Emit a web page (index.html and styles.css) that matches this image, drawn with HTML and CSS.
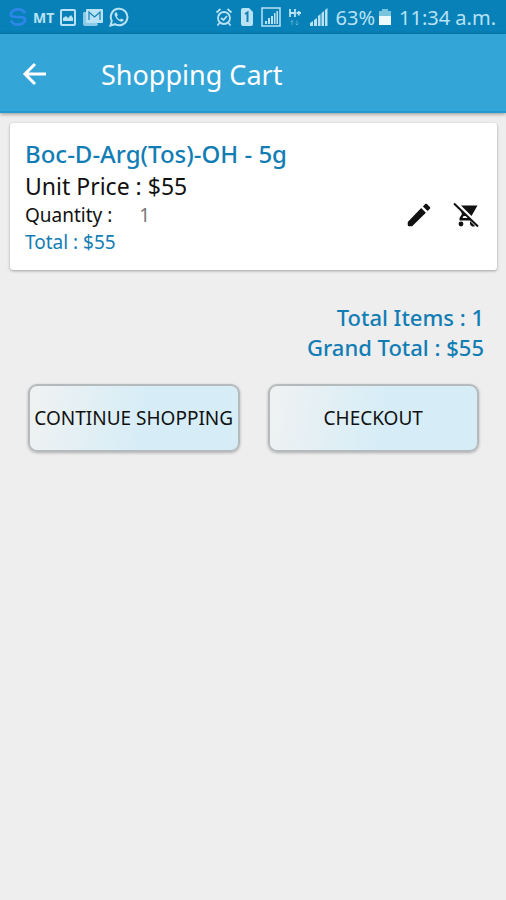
FILE: index.html
```html
<!DOCTYPE html>
<html lang="en">
<head>
<meta charset="utf-8">
<meta name="viewport" content="width=device-width, initial-scale=1">
<title>Shopping Cart</title>
<link rel="stylesheet" href="styles.css">
</head>
<body>
<div class="status">
  <div class="status-group notices">
    <svg width="20" height="20" viewBox="0 0 20 20" fill="none" stroke="#2f86ea" stroke-width="2.600"><path d="M17 6.500C15 1 5 1 3 6.500C2 10 6 10 10 10S18 10 17 13.500C15 19 5 19 3 13.500"/></svg>
    <span class="carrier">MT</span>
    <svg width="18" height="18" viewBox="0 0 18 18"><rect x="2" y="2" width="14" height="15" rx="1" fill="none" stroke="currentColor" stroke-width="2"/><path d="M4 13V10l3-2 2 2 3-3 2 3v3z" fill="currentColor"/></svg>
    <svg width="22" height="20" viewBox="0 0 22 20"><path d="M4 5H2Q1 5 1 6V17Q1 19 3 19H14Q16 19 16 17z" fill="currentColor" opacity=".75"/><rect x="4" y="2" width="17" height="14" rx="1" fill="currentColor"/><path d="M7 13V5l5.500 5L18 5v8" fill="none" stroke="#1580b5" stroke-width="1.200"/></svg>
    <svg width="20" height="20" viewBox="0 0 20 20"><path d="M1.500 18.500l1.300-4.600A8.300 8.300 0 1 1 6 17.200z" fill="none" stroke="currentColor" stroke-width="2"/><path d="M6.800 5.200c-1.200.6-1.500 2-.9 3.500 1 2.600 2.900 4.600 5.600 5.700 1.500.6 2.900 0 3.300-1.600l-2.500-1.400-1.300 1.200c-1.400-.6-2.400-1.600-3.200-3.200l1-1.200-1-2.700z" fill="currentColor"/></svg>
  </div>
  <div class="status-group system">
    <svg width="18" height="20" viewBox="0 0 18 20" fill="none" stroke="currentColor" stroke-width="1.800"><circle cx="9" cy="11" r="6"/><path d="M1.500 5.500l4-3.500M16.500 5.500l-4-3.500M6 11l2.500 2L12 9M4.500 16l-2 2.500M13.500 16l2 2.500"/></svg>
    <svg width="14" height="20" viewBox="0 0 14 20"><path d="M1 3Q1 1 3 1H9L13 5V17Q13 19 11 19H3Q1 19 1 17z" fill="currentColor"/><path d="M5 7l2.500-1.500V15" fill="none" stroke="#1580b5" stroke-width="2"/></svg>
    <svg width="20" height="20" viewBox="0 0 20 20"><rect x="1" y="1" width="18" height="18" fill="none" stroke="currentColor" stroke-width="1.500"/><path d="M4 17v-3h2v3zM7 17v-6h2v6zM10 17V9h2v8zM13 17V6h1.500v11zM15.500 17V4H17v13z" fill="currentColor"/></svg>
    <svg width="14" height="20" viewBox="0 0 14 20" fill="none" stroke="currentColor"><path d="M2 2v8M7 2v8M2 6h5M8.500 6H13M10.800 4v4.500" stroke-width="1.800"/><path d="M4 18v-4.500M2.500 15L4 13.500 5.500 15M9 13.500V18M7.500 16.500L9 18l1.500-1.500" opacity=".4"/></svg>
    <svg width="20" height="20" viewBox="0 0 20 20"><path d="M1 19v-3l3-2v5zM5 19v-6l3-2v8zM9 19V9l2.500-2v12zM12.500 19V6L15 4v15zM16 19V3l2.500-2v18z" fill="currentColor"/></svg>
    <span>63%</span>
    <svg class="battery" width="14" height="18" viewBox="0 0 14 18"><path d="M1 3h3V1h6v2h3v5H1z" fill="#78c4dc"/><path d="M1 8h12v9H1z" fill="#edf9fd"/></svg>
    <span class="clock">11:34 a.m.</span>
  </div>
</div>
<header class="bar">
  <button class="icon-button back" aria-label="Back">
    <svg width="30" height="30" viewBox="0 0 30 30" fill="none" stroke="currentColor" stroke-width="3"><path d="M26 14H5M15 4L5 14l10 10"/></svg>
  </button>
  <h1>Shopping Cart</h1>
</header>
<main>
  <article class="card">
    <div class="info">
      <h2>Boc-D-Arg(Tos)-OH - 5g</h2>
      <p class="price">Unit Price : $55</p>
      <p class="small">Quantity : <span class="quantity">1</span></p>
      <p class="small total">Total : $55</p>
    </div>
    <div class="actions">
      <button class="icon-button" aria-label="Edit quantity">
        <svg width="30" height="30" viewBox="0 0 24 24" fill="currentColor"><path d="M3 17.500V20q0 1 1 1h2.500L17.500 10.200l-3.750-3.750L3 17.500zM20.710 7.040c.39-.39.39-1.020 0-1.410l-2.340-2.340c-.39-.39-1.020-.39-1.410 0l-1.830 1.830 3.750 3.750 1.830-1.830z"/></svg>
      </button>
      <button class="icon-button" aria-label="Remove from cart">
        <svg width="26" height="26" viewBox="0 0 26 26" fill="currentColor"><path d="M8 3.500h16.500L18.500 14z"/><path d="M7.500 8.500L9 12l-2.500 4v2.500h11.500L16 16H9.500l1-2H14z"/><path d="M1 1.500l24 23" fill="none" stroke="currentColor" stroke-width="2"/><circle cx="8" cy="22" r="2.400"/><path d="M17 19l5 5q-2 1-3.500 0T17 21.500z"/></svg>
      </button>
    </div>
  </article>
  <section class="summary">
    <p>Total Items : 1</p>
    <p>Grand Total : $55</p>
  </section>
  <div class="buttons">
    <button class="action">CONTINUE SHOPPING</button>
    <button class="action">CHECKOUT</button>
  </div>
</main>
</body>
</html>
```
FILE: styles.css
```css
* {
  box-sizing: border-box;
}

body {
  margin: 0;
  min-height: 100vh;
  background: #eee;
  color: #111;
  font-family: "Noto Sans", sans-serif;
}

h1, h2, p {
  margin: 0;
  font-weight: 400;
}

button {
  font-family: inherit;
  color: inherit;
  cursor: pointer;
}

svg {
  display: block;
  flex: none;
}

.status {
  display: flex;
  justify-content: space-between;
  align-items: center;
  height: 34px;
  padding: 0 10px 0 8px;
  background: #0781b7;
  color: #b9e2f5;
  font-size: 20px;
  white-space: nowrap;
}

.status-group {
  display: flex;
  align-items: center;
}

.notices {
  gap: 5px;
}

.system {
  gap: 7px;
}

.carrier {
  font-size: 14px;
  font-weight: 700;
}

.battery {
  margin-left: -4px;
}

.bar {
  display: flex;
  align-items: center;
  gap: 50px;
  height: 79px;
  padding: 4px 20px 0 19px;
  background: #34a5d7;
  border-bottom: 2px solid #219bcf;
  box-shadow: 0 1px 4px #0006;
  color: #fff;
}

.bar h1 {
  font-size: 27px;
  line-height: 36px;
}

.icon-button {
  display: grid;
  place-items: center;
  width: 32px;
  height: 32px;
  padding: 0;
  border: 0;
  background: none;
}

.card {
  display: flex;
  justify-content: space-between;
  align-items: flex-end;
  margin: 10px 9px 0 10px;
  padding: 15px 15px 14px;
  background: #fff;
  border-radius: 3px;
  box-shadow: 0 1px 3px #0005;
}

.card h2 {
  color: #127db5;
  font-size: 24px;
  font-weight: 500;
  line-height: 32px;
}

.price {
  font-size: 23px;
  line-height: 32px;
}

.small {
  font-size: 19px;
  line-height: 27px;
}

.quantity {
  margin-left: 22px;
  color: #777;
}

.total {
  color: #127db5;
}

.actions {
  display: flex;
  gap: 15px;
  padding-bottom: 25px;
}

.summary {
  padding: 32px 22px 0;
  color: #127db5;
  font-size: 22px;
  font-weight: 500;
  line-height: 30px;
  text-align: right;
}

.summary p {
  font-weight: inherit;
}

.buttons {
  display: grid;
  grid-template-columns: 1fr 1fr;
  gap: 28px;
  padding: 22px 27px 0 28px;
}

.action {
  height: 68px;
  padding: 0;
  border: 2px solid #b5babc;
  border-radius: 9px;
  background: linear-gradient(100deg, #f0f2f2, #d6edf7 55%);
  box-shadow: 0 1px 3px #0004;
  font-size: 19px;
  white-space: nowrap;
}
```
